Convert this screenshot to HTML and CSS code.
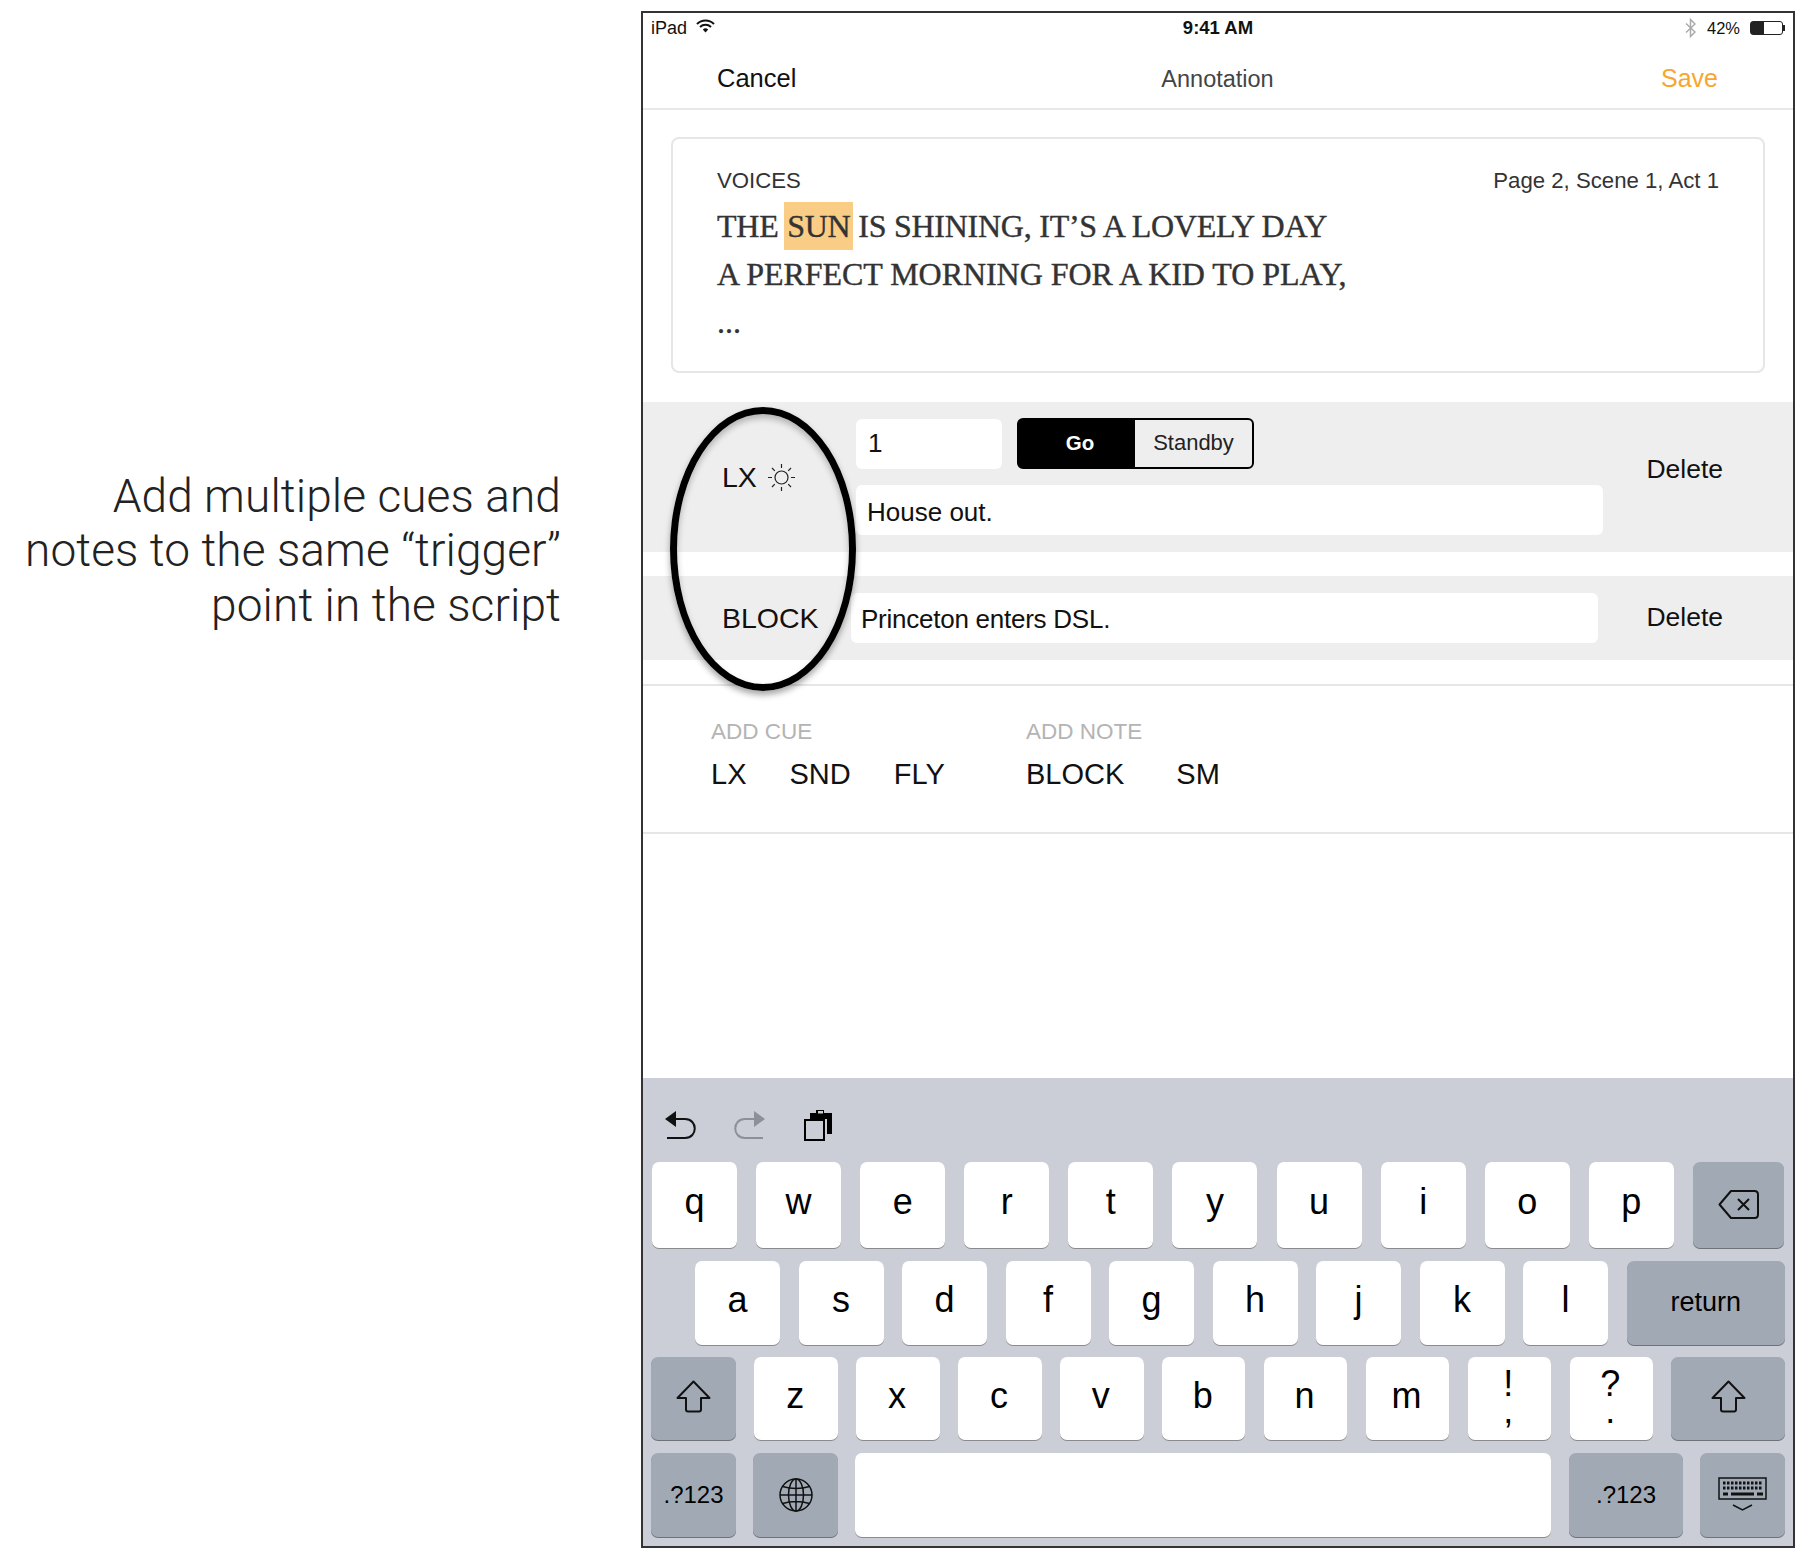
FILE: index.html
```html
<!DOCTYPE html>
<html lang="en">
<head>
    <meta charset="UTF-8">
    <title>Annotation</title>
    <link rel="stylesheet" href="styles.css">
</head>
<body>
<div class="page">
    <p class="caption">Add multiple cues and<br>notes to the same “trigger”<br>point in the script</p>

    <div class="device">
        <div class="status">
            <div class="status-left">
                <span>iPad</span>
                <svg class="wifi" width="19" height="14" viewBox="0 0 19 14"><path d="M1 5 A12 12 0 0 1 18 5" fill="none" stroke="#111" stroke-width="2"/><path d="M4 8 A8 8 0 0 1 15 8" fill="none" stroke="#111" stroke-width="2"/><path d="M6.8 10.4 A4 4 0 0 1 12.2 10.4 L9.5 13.4 Z" fill="#111"/></svg>
            </div>
            <div class="status-time">9:41 AM</div>
            <div class="status-right">
                <svg width="11" height="20" viewBox="0 0 11 20"><path d="M1 5.5 L10 14 L5.5 18.5 V1.5 L10 6 L1 14.5" fill="none" stroke="#aaa" stroke-width="1.5"/></svg>
                <span class="percent">42%</span>
                <div class="battery"><div class="battery-fill"></div></div>
            </div>
        </div>

        <div class="nav">
            <span class="nav-cancel">Cancel</span>
            <span class="nav-title">Annotation</span>
            <span class="nav-save">Save</span>
        </div>

        <div class="card">
            <div class="card-head">
                <span>VOICES</span>
                <span>Page 2, Scene 1, Act 1</span>
            </div>
            <p class="lyric lyric-first">THE <span class="mark">SUN</span> IS SHINING, IT’S A LOVELY DAY</p>
            <p class="lyric">A PERFECT MORNING FOR A KID TO PLAY,</p>
            <p class="lyric">...</p>
        </div>

        <div class="cue cue-lx">
            <div class="cue-label cue-label-lx">
                LX
                <svg class="sun" width="29" height="29" viewBox="0 0 29 29" fill="none" stroke="#222" stroke-width="1.2"><circle cx="14.5" cy="14.5" r="6.5"/><path d="M14.5 1V5M14.5 24V28M1 14.5H5M24 14.5H28M5 5L7.8 7.8M21.2 21.2L24 24M24 5L21.2 7.8M7.8 21.2L5 24"/></svg>
            </div>
            <div class="fields">
                <div class="fields-top">
                    <div class="input input-number">1</div>
                    <div class="segment">
                        <span class="segment-on">Go</span>
                        <span class="segment-off">Standby</span>
                    </div>
                </div>
                <div class="input">House out.</div>
            </div>
            <span class="delete delete-lx">Delete</span>
        </div>

        <div class="cue cue-block">
            <div class="cue-label cue-label-block">BLOCK</div>
            <div class="fields">
                <div class="input input-note">Princeton enters DSL.</div>
            </div>
            <span class="delete delete-block">Delete</span>
        </div>

        <div class="add">
            <div class="add-group add-cue">
                <div class="add-title">ADD CUE</div>
                <div class="add-items">
                    <span>LX</span><span>SND</span><span>FLY</span>
                </div>
            </div>
            <div class="add-group">
                <div class="add-title">ADD NOTE</div>
                <div class="add-items add-items-note">
                    <span>BLOCK</span><span>SM</span>
                </div>
            </div>
        </div>

        <div class="blank"></div>

        <div class="keyboard">
            <div class="tools">
                <svg width="32" height="29" viewBox="0 0 32 29" fill="none"><path d="M0 9L11 1V17Z" fill="#111"/><path d="M10 9H20C33 9 33 28 20 28H2" stroke="#111" stroke-width="2"/></svg>
                <svg width="32" height="29" viewBox="0 0 32 29" fill="none"><path d="M32 9L21 1V17Z" fill="#8e9097"/><path d="M22 9H12C-1 9 -1 28 12 28H30" stroke="#8e9097" stroke-width="2"/></svg>
                <svg class="paste" width="29" height="31" viewBox="0 0 29 31" fill="none"><path d="M6 9V3H12V0H20V3H28V24H23V9Z" fill="#000"/><rect x="14" y="1" width="5" height="2.5" fill="#cbced6"/><rect x="1" y="10" width="19" height="20" stroke="#000" stroke-width="2"/></svg>
            </div>

            <div class="keys keys-1">
                <div class="key">q</div><div class="key">w</div><div class="key">e</div><div class="key">r</div><div class="key">t</div>
                <div class="key">y</div><div class="key">u</div><div class="key">i</div><div class="key">o</div><div class="key">p</div>
                <div class="key dark key-back">
                    <svg width="41" height="29" viewBox="0 0 41 29" fill="none" stroke="#111" stroke-width="2"><path d="M1.5 14.5L13 1H36.5Q40 1 40 4.5V24.5Q40 28 36.5 28H13Z" stroke-linejoin="round"/><path d="M20 9L31 20M31 9L20 20"/></svg>
                </div>
            </div>

            <div class="keys keys-2">
                <div class="key">a</div><div class="key">s</div><div class="key">d</div><div class="key">f</div><div class="key">g</div>
                <div class="key">h</div><div class="key">j</div><div class="key">k</div><div class="key">l</div>
                <div class="key dark key-return">return</div>
            </div>

            <div class="keys keys-3">
                <div class="key dark key-shift">
                    <svg width="35" height="33" viewBox="0 0 35 33" fill="none" stroke="#111" stroke-width="2"><path d="M17.5 1.5L33.5 18H25V29.5Q25 31.5 23 31.5H12Q10 31.5 10 29.5V18H1.5Z" stroke-linejoin="round"/></svg>
                </div>
                <div class="key">z</div><div class="key">x</div><div class="key">c</div><div class="key">v</div>
                <div class="key">b</div><div class="key">n</div><div class="key">m</div>
                <div class="key key-punct"><span>!</span><span>,</span></div>
                <div class="key key-punct"><span>?</span><span>.</span></div>
                <div class="key dark key-shift-right">
                    <svg width="35" height="33" viewBox="0 0 35 33" fill="none" stroke="#111" stroke-width="2"><path d="M17.5 1.5L33.5 18H25V29.5Q25 31.5 23 31.5H12Q10 31.5 10 29.5V18H1.5Z" stroke-linejoin="round"/></svg>
                </div>
            </div>

            <div class="keys keys-4">
                <div class="key dark key-num">.?123</div>
                <div class="key dark key-globe">
                    <svg width="34" height="34" viewBox="0 0 34 34" fill="none" stroke="#111" stroke-width="1.5"><circle cx="17" cy="17" r="16"/><ellipse cx="17" cy="17" rx="7.5" ry="16"/><path d="M17 1V33M1 17H33M3.5 8.5Q17 12.5 30.5 8.5M3.5 25.5Q17 21.5 30.5 25.5"/></svg>
                </div>
                <div class="key key-space"></div>
                <div class="key dark key-num key-num-right">.?123</div>
                <div class="key dark key-hide">
                    <svg width="50" height="36" viewBox="0 0 50 36" fill="none" stroke="#111"><rect x="1" y="1" width="47" height="21" stroke-width="1.5"/><path d="M5 6H45M5 11H45" stroke-width="3" stroke-dasharray="2.5 1.5"/><path d="M5 17H10M13 17H36M39 17H45" stroke-width="3"/><path d="M15 28L24.5 33L34 28" stroke-width="1.5"/></svg>
                </div>
            </div>
        </div>
    </div>

    <div class="ring"></div>
</div>
</body>
</html>
```

FILE: styles.css
```css
body {
    margin: 0;
    background: #fff;
    font-family: "Liberation Sans", Arial, sans-serif;
    color: #111;
}

.page {
    position: relative;
    display: flex;
    width: 1810px;
    height: 1562px;
}

.caption {
    width: 561px;
    margin: 469px 0 0;
    font-family: Roboto, sans-serif;
    font-size: 46px;
    font-weight: 300;
    letter-spacing: 0.1px;
    line-height: 54.3px;
    text-align: right;
    color: #222;
}

.device {
    display: flex;
    flex-direction: column;
    width: 1154px;
    height: 1537px;
    margin: 11px 0 0 80px;
    box-sizing: border-box;
    border: 2px solid #333;
}

/* status bar */
.status {
    display: grid;
    grid-template-columns: 1fr auto 1fr;
    align-items: center;
    height: 28px;
    padding: 2px 8px 0;
    box-sizing: border-box;
    font-size: 18px;
}

.status-left {
    display: flex;
    align-items: center;
    gap: 9px;
}

.wifi {
    margin-top: -4px;
}

.status-time {
    font-size: 18.5px;
    font-weight: bold;
}

.status-right {
    display: flex;
    justify-content: flex-end;
    align-items: center;
    gap: 8px;
}

.percent {
    margin: 0 2px 0 3px;
    font-size: 16.5px;
}

.battery {
    position: relative;
    width: 33px;
    height: 14px;
    margin-right: 2px;
    box-sizing: border-box;
    border: 1px solid #222;
    border-radius: 3px;
}

.battery-fill {
    width: 13px;
    height: 100%;
    background: #222;
}

.battery::after {
    content: "";
    position: absolute;
    top: 3px;
    right: -3px;
    width: 2px;
    height: 6px;
    background: #222;
}

/* nav bar */
.nav {
    display: grid;
    grid-template-columns: 1fr auto 1fr;
    align-items: center;
    height: 59px;
    padding: 8px 75px 0 74px;
    border-bottom: 2px solid #e8e8e8;
    font-size: 25.5px;
}

.nav-title {
    padding-top: 2px;
    font-size: 23.5px;
    color: #444;
}

.nav-save {
    justify-self: end;
    font-size: 25px;
    color: #f8a62d;
}

/* script card */
.card {
    height: 236px;
    margin: 27px 28px 29px;
    padding: 28px 44px 0 44px;
    box-sizing: border-box;
    border: 2px solid #e6e6e6;
    border-radius: 8px;
}

.card-head {
    display: flex;
    justify-content: space-between;
    margin-bottom: 7px;
    font-size: 22.2px;
    line-height: 28px;
    color: #333;
}

.lyric {
    margin: 0;
    font-family: "Liberation Serif", serif;
    font-size: 32px;
    letter-spacing: -0.05px;
    line-height: 48px;
    color: #333;
    -webkit-text-stroke: 0.4px #333;
}

.lyric-first {
    letter-spacing: -0.25px;
}

.mark {
    display: inline-block;
    margin: 0 -3px 0 -2px;
    padding: 0 3px;
    background: #f9cd85;
}

/* cue rows */
.cue {
    display: flex;
    align-items: center;
    background: #eee;
    font-size: 26px;
}

.cue-lx {
    height: 150px;
    margin-bottom: 24px;
}

.cue-block {
    height: 84px;
}

.cue-label {
    display: flex;
    align-items: center;
    box-sizing: border-box;
    padding-left: 79px;
    font-size: 28.5px;
}

.cue-label-lx {
    width: 213px;
}

.cue-label-block {
    width: 208px;
}

.sun {
    margin-left: 10px;
}

.fields {
    display: flex;
    flex-direction: column;
    gap: 16px;
    width: 747px;
}

.fields-top {
    display: flex;
    gap: 15px;
}

.input {
    height: 50px;
    padding: 0 11px;
    box-sizing: border-box;
    border-radius: 6px;
    background: #fff;
    line-height: 54px;
}

.input-number {
    width: 146px;
    padding-left: 12px;
    line-height: 48px;
}

.input-note {
    padding-left: 10px;
    letter-spacing: -0.25px;
    line-height: 52px;
}

.segment {
    display: flex;
    width: 237px;
    height: 51px;
    margin-top: -1px;
    box-sizing: border-box;
    border: 2px solid #000;
    border-radius: 6px;
    font-size: 22px;
    line-height: 45px;
    text-align: center;
}

.segment-on {
    width: 116px;
    padding-left: 6px;
    box-sizing: border-box;
    background: #000;
    color: #fff;
    font-size: 20.5px;
    font-weight: bold;
}

.segment-off {
    flex: 1;
    color: #222;
}

.delete {
    margin-left: auto;
    padding-right: 70px;
    font-size: 26.5px;
}

.delete-lx {
    margin-bottom: 16px;
}

.delete-block {
    margin-bottom: 2px;
}

/* add cue / note */
.add {
    display: flex;
    margin-top: 24px;
    padding: 32px 0 0 68px;
    height: 114px;
    border-top: 2px solid #e6e6e6;
    border-bottom: 2px solid #e6e6e6;
}

.add-cue {
    width: 315px;
}

.add-title {
    margin-bottom: 12px;
    font-size: 22.5px;
    line-height: 28px;
    color: #b4b4b4;
}

.add-items {
    display: flex;
    gap: 43px;
    font-size: 29px;
    line-height: 32px;
}

.add-items-note {
    gap: 52px;
}

.blank {
    flex: 1;
}

/* keyboard */
.keyboard {
    height: 468px;
    background: #cbced6;
}

.tools {
    display: flex;
    align-items: flex-start;
    gap: 36px;
    height: 84px;
    padding: 32px 0 0 22px;
    box-sizing: border-box;
}

.paste {
    margin-left: 3px;
}

.keys {
    display: flex;
    height: 84px;
    margin-bottom: 12px;
}

.keys-1 {
    gap: 19.1px;
    height: 86px;
    margin-bottom: 13px;
    padding-left: 9px;
}

.keys-2 {
    gap: 18.5px;
    margin-bottom: 12px;
    padding-left: 52px;
}

.keys-3 {
    gap: 18.4px;
    height: 83px;
    margin-bottom: 13px;
    padding-left: 8px;
}

.keys-4 {
    gap: 17px;
    padding-left: 8px;
}

.key {
    display: flex;
    justify-content: center;
    align-items: center;
    flex: none;
    width: 85px;
    box-sizing: border-box;
    padding-bottom: 6px;
    border-radius: 7px;
    background: #fff;
    box-shadow: 0 1px 0 #8a8b8f;
    font-size: 36px;
    color: #000;
}

.keys-3 .key {
    width: 83.5px;
    padding-right: 2px;
}

.dark {
    background: #a1aab4;
    box-shadow: 0 1px 0 #6f7277;
}

.keys-3 .key-shift {
    width: 85px;
    padding: 0 0 4px;
}

.keys-3 .key-shift-right {
    width: 114px;
    padding: 0 0 4px;
}

.key-back {
    width: 91px;
    padding-bottom: 2px;
}

.key-return {
    width: 158.5px;
    padding-bottom: 2px;
    font-size: 27px;
}

.key-punct {
    flex-direction: column;
    padding-bottom: 3px;
    font-size: 36px;
    line-height: 27px;
}

.key-num {
    padding-bottom: 0;
    font-size: 24px;
}

.key-globe {
    padding-bottom: 0;
}

.key-space {
    width: 696px;
}

.key-num-right {
    width: 114px;
    margin-left: 1px;
}

.key-hide {
    padding-bottom: 0;
}

/* drawn over the screenshot */
.ring {
    position: absolute;
    left: 670px;
    top: 407px;
    width: 186px;
    height: 284px;
    box-sizing: border-box;
    border: 7.5px solid #000;
    border-radius: 50%;
    box-shadow: 0 4px 6px rgba(0, 0, 0, 0.35), inset 0 4px 6px rgba(0, 0, 0, 0.25);
}
```
